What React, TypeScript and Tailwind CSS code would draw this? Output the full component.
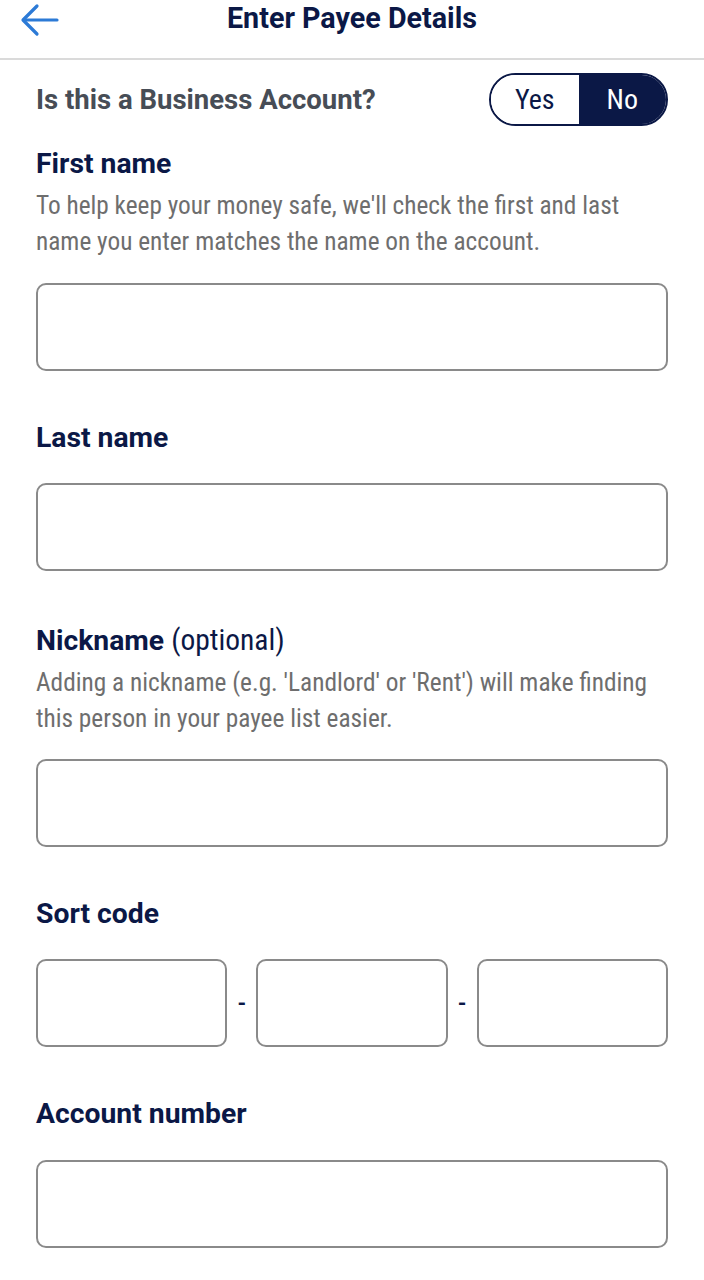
const navy = "text-[#0b1846]";

function Field({ className = "" }: { className?: string }) {
  return (
    <div className={`h-[88px] rounded-[10px] border-2 border-[#8a8a8a] bg-white ${className}`} />
  );
}

function Label({ children, className = "" }: { children: React.ReactNode; className?: string }) {
  return (
    <h2 className={`text-[28.3px] leading-[36px] font-bold ${navy} ${className}`}>{children}</h2>
  );
}

function Help({ children }: { children: React.ReactNode }) {
  return (
    <p className="mt-[6px] text-[25.3px] leading-[36px] font-stretch-condensed text-[#6e6e6e]">{children}</p>
  );
}

export default function App() {
  return (
    <div className="min-h-screen bg-white font-['Roboto',sans-serif]">
      {/* Header */}
      <header className="grid h-[60px] grid-cols-[1fr_auto_1fr] border-b-2 border-[#dadada]">
        <button className="flex h-[40px] items-center pl-[20px] text-[#2c7ad6]">
          <svg width="40" height="34" viewBox="0 0 40 34" fill="none" stroke="currentColor" strokeWidth="3.2" strokeLinecap="round" strokeLinejoin="round">
            <path d="M37 17H4" />
            <path d="M17 3L3 17l14 14" />
          </svg>
        </button>
        <h1 className={`text-[28.7px] leading-[36px] font-bold ${navy}`}>Enter Payee Details</h1>
        <div />
      </header>

      <main className="px-[36px]">
        {/* Business account toggle */}
        <div className="mt-[13px] flex items-center justify-between">
          <span className="text-[27.5px] leading-[36px] font-bold text-[#474d56]">
            Is this a Business Account?
          </span>
          <div className="flex h-[53px] w-[179px] overflow-hidden rounded-full border-2 border-[#0b1846]">
            <button className={`flex-1 bg-white text-[28px] font-stretch-condensed ${navy}`}>Yes</button>
            <button className="flex-1 bg-[#0b1846] text-[28px] font-stretch-condensed text-white">No</button>
          </div>
        </div>

        <Label className="mt-[20px]">First name</Label>
        <Help>
          To help keep your money safe, we'll check the first and last name you enter matches the name on the account.
        </Help>
        <Field className="mt-[23px]" />

        <Label className="mt-[49px]">Last name</Label>
        <Field className="mt-[27px]" />

        <Label className="mt-[51px]">
          Nickname <span className="text-[29.5px] font-normal font-stretch-condensed">(optional)</span>
        </Label>
        <Help>
          Adding a nickname (e.g. 'Landlord' or 'Rent') will make finding this person in your payee list easier.
        </Help>
        <Field className="mt-[22px]" />

        <Label className="mt-[49px]">Sort code</Label>
        <div className="mt-[27px] flex items-center">
          <Field className="flex-1" />
          <span className={`w-[29px] text-center text-[22px] font-bold ${navy}`}>-</span>
          <Field className="flex-1" />
          <span className={`w-[29px] text-center text-[22px] font-bold ${navy}`}>-</span>
          <Field className="flex-1" />
        </div>

        <Label className="mt-[49px]">Account number</Label>
        <Field className="mt-[28px]" />
      </main>
    </div>
  );
}
